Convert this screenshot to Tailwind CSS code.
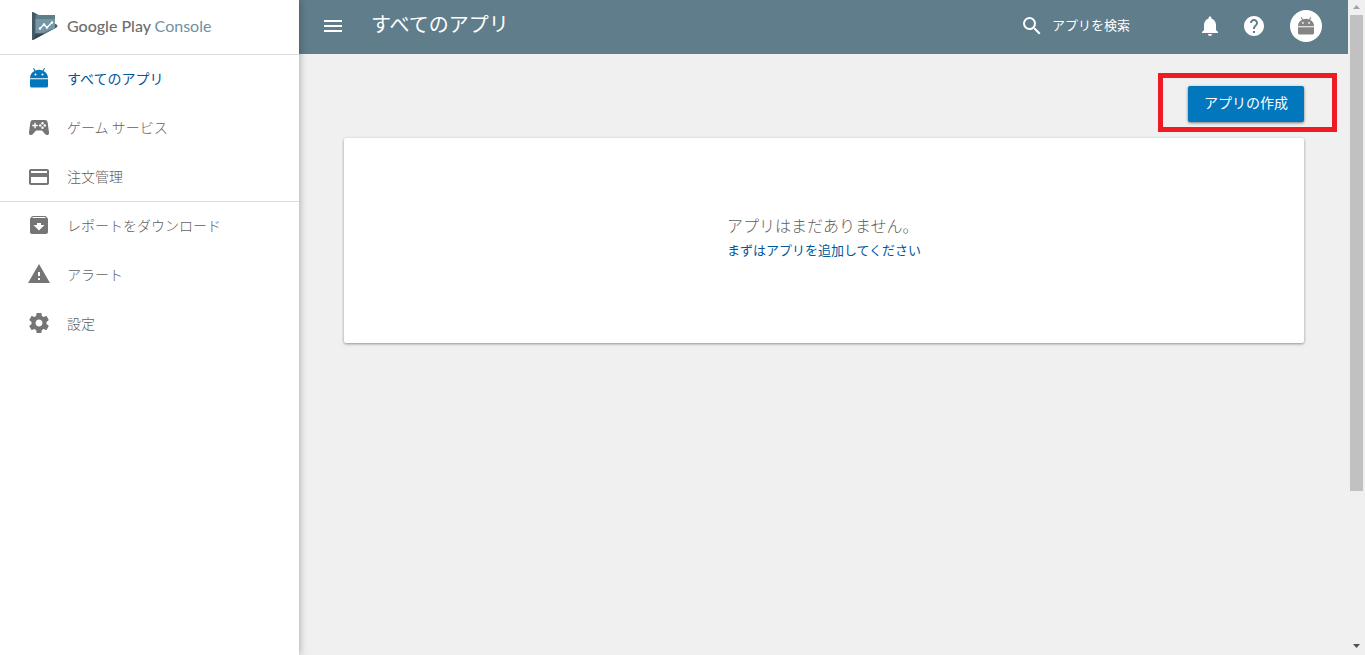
<!DOCTYPE html>
<html lang="ja">
<head>
<meta charset="utf-8">
<meta name="viewport" content="width=device-width, initial-scale=1">
<title>Google Play Console</title>
<script src="https://cdn.jsdelivr.net/npm/@tailwindcss/browser@4"></script>
</head>
<body class="flex h-screen overflow-hidden bg-[#f0f0f0] font-['Noto_Sans_CJK_JP',sans-serif] text-sm font-light text-[#616161]">

<svg class="hidden" aria-hidden="true">
  <symbol id="android" viewBox="0 0 18 20">
    <path d="M3 .6 3.8 0 5.6 2.4Q9 1.2 12.4 2.4L14.2 0 15 .6 13.5 3Q18 5.300 18 10.200H0Q0 5.300 4.500 3ZM5.500 5.600a1 1 0 1 0 0 2 1 1 0 1 0 0-2zm7 0a1 1 0 1 0 0 2 1 1 0 1 0 0-2z" fill-rule="evenodd"/>
    <path d="M0 11.300h18V18q0 1.500-1.500 1.500h-15Q0 19.500 0 18z"/>
  </symbol>
</svg>

<aside class="relative z-10 flex w-[299px] shrink-0 flex-col bg-white shadow-[0_0_8px_rgba(0,0,0,0.35)]">
  <a href="#" class="flex h-[55px] items-center border-b border-[#dcdcdc] pb-[3px] pl-[31px] font-['Lato',sans-serif] text-base">
    <svg class="mr-[9px] h-7 w-[27px]" viewBox="0 0 27 28" aria-hidden="true">
      <path d="M1 .5Q1-.5 2.500.3L25.500 12.500Q27.500 14 25.500 15.500L2.500 27.700Q1 28.500 1 27.500z" fill="#455a64"/>
      <path d="M4.500 3H24V16.300L8 24.500 4.500 21z" fill="#607d8b"/>
      <path d="M4.500 7H24V16.300L8.500 21.500H4.500z" fill="#7596a6"/>
      <path d="M4.500 21.500H13.800L2.500 27.700Z" fill="#37474f"/>
      <path d="m9 16.500 4-4 3 3 5-5" fill="none" stroke="#fff" stroke-width="1.300"/>
      <g fill="#fff"><circle cx="9" cy="16.500" r="1.200"/><circle cx="13" cy="12.500" r="1.200"/><circle cx="16" cy="15.500" r="1.200"/><circle cx="21" cy="10.500" r="1.200"/></g>
    </svg>
    <span class="whitespace-pre font-medium text-[#6e6e6e]">Google Play </span><span class="font-normal text-[#7090a0]">Console</span>
  </a>
  <nav class="[&_a]:flex [&_a]:h-[49px] [&_a]:items-center [&_a]:gap-4 [&_a]:pb-[3px] [&_a]:pl-[27px] [&_span]:pb-px [&_svg]:size-6 [&_svg]:fill-[#757575]">
    <div class="border-b border-[#dcdcdc] [&>a:last-child]:h-[48px] [&>a:last-child]:pb-px">
      <a href="#" class="font-normal text-[#01579b]"><svg class="fill-[#0277bd]!" viewBox="0 0 24 24"><use href="#android" x="3" y="2" width="18" height="20"/></svg><span>すべてのアプリ</span></a>
      <a href="#"><svg viewBox="0 0 24 24"><path d="M6 5h12q2.200 0 2.600 2.200L22 17.200Q22.300 20 20 20q-1.200 0-2-1l-3-3.500H9L6 19q-.8 1-2 1-2.300 0-2-2.800L3.400 7.200Q3.800 5 6 5z"/><path class="fill-white" d="M7.300 7.700h1.400v2.100h2.100v1.400H8.700v2.100H7.300v-2.100H5.200V9.800h2.100z"/><g class="fill-white"><circle cx="15.500" cy="8.200" r="1.200"/><circle cx="15.500" cy="12.800" r="1.200"/><circle cx="13.200" cy="10.500" r="1.200"/><circle cx="17.800" cy="10.500" r="1.200"/></g></svg><span>ゲーム サービス</span></a>
      <a href="#"><svg viewBox="0 0 24 24"><path d="M20 4H4c-1.110 0-1.990.89-1.990 2L2 18c0 1.110.89 2 2 2h16c1.110 0 2-.9 2-2V6c0-1.110-.89-2-2-2zm0 14H4v-6h16v6zm0-10H4V6h16v2z"/></svg><span>注文管理</span></a>
    </div>
    <a href="#"><svg viewBox="0 0 24 24"><path d="m20.540 5.230-1.390-1.680C18.880 3.210 18.470 3 18 3H6c-.47 0-.88.21-1.160.55L3.460 5.230C3.170 5.570 3 6.020 3 6.500V19c0 1.100.9 2 2 2h14c1.100 0 2-.9 2-2V6.500c0-.48-.17-.93-.46-1.270zM12 17.500 6.500 12H10v-2h4v2h3.500L12 17.500zM5.120 5l.81-1h12l.94 1H5.120z"/></svg><span>レポートをダウンロード</span></a>
    <a href="#"><svg viewBox="0 0 24 24"><path d="M1 21h22L12 2 1 21zm12-3h-2v-2h2v2zm0-4h-2v-4h2v4z"/></svg><span>アラート</span></a>
    <a href="#"><svg viewBox="0 0 24 24"><path d="M19.430 12.980c.04-.32.070-.64.070-.98s-.03-.66-.07-.98l2.110-1.650c.19-.15.24-.42.12-.64l-2-3.460c-.12-.22-.39-.3-.61-.22l-2.490 1c-.52-.4-1.080-.73-1.690-.98l-.38-2.650C14.460 2.180 14.250 2 14 2h-4c-.25 0-.46.18-.49.42l-.38 2.650c-.61.25-1.170.59-1.690.98l-2.490-1c-.23-.09-.49 0-.61.22l-2 3.460c-.13.22-.07.49.12.64l2.110 1.650c-.04.32-.07.65-.07.98s.03.66.07.98l-2.110 1.650c-.19.15-.24.42-.12.64l2 3.460c.12.22.39.3.61.22l2.490-1c.52.4 1.080.73 1.690.98l.38 2.650c.03.24.24.42.49.42h4c.25 0 .46-.18.49-.42l.38-2.650c.61-.25 1.170-.59 1.690-.98l2.490 1c.23.09.49 0 .61-.22l2-3.460c.12-.22.070-.49-.12-.64l-2.110-1.650zM12 15.500c-1.930 0-3.500-1.570-3.500-3.500s1.570-3.500 3.500-3.500 3.500 1.570 3.500 3.500-1.570 3.500-3.500 3.500z"/></svg><span>設定</span></a>
  </nav>
</aside>

<div class="flex min-w-0 flex-1 flex-col">
  <header class="flex h-[54px] shrink-0 items-center bg-[#607d8b] pb-0.5 pr-[26px] pl-[22px] text-white">
    <button type="button" aria-label="メニュー" class="mr-[26px]"><svg class="size-6 fill-white" viewBox="0 0 24 24"><path d="M2 18h18v-2H2v2zm0-5h18v-2H2v2zm0-7v2h18V6H2z" transform="translate(1)"/></svg></button>
    <h1 class="pb-1 text-xl font-normal">すべてのアプリ</h1>
    <label class="mr-[46px] ml-auto flex items-center gap-2">
      <svg class="size-6 fill-white" viewBox="0 0 24 24"><path d="M15.500 14h-.79l-.28-.27A6.471 6.471 0 0 0 16 9.500 6.500 6.500 0 1 0 9.500 16c1.610 0 3.090-.59 4.230-1.570l.27.28v.79l5 4.990L20.490 19l-4.990-5zm-6 0C7.010 14 5 11.990 5 9.500S7.010 5 9.500 5 14 7.010 14 9.500 11.990 14 9.500 14z"/></svg>
      <input type="text" aria-label="アプリを検索" placeholder="アプリを検索" class="w-[100px] bg-transparent pb-0.5 text-[13px] font-normal outline-none placeholder:text-white">
    </label>
    <button type="button" aria-label="通知" class="mr-5"><svg class="size-6 fill-white" viewBox="0 0 24 24"><path d="M12 22c1.100 0 2-.9 2-2h-4c0 1.100.89 2 2 2zm6-6v-5c0-3.070-1.640-5.640-4.500-6.320V4c0-.83-.67-1.500-1.500-1.500s-1.500.67-1.500 1.500v.68C7.630 5.360 6 7.920 6 11v5l-2 2v1h16v-1l-2-2z"/></svg></button>
    <button type="button" aria-label="ヘルプ" class="mr-6"><svg class="size-6 fill-white" viewBox="0 0 24 24"><path d="M12 2C6.480 2 2 6.480 2 12s4.480 10 10 10 10-4.480 10-10S17.520 2 12 2zm1 17h-2v-2h2v2zm2.070-7.750-.9.920C13.450 12.900 13 13.500 13 15h-2v-.5c0-1.100.45-2.100 1.170-2.830l1.240-1.260c.37-.36.59-.86.59-1.410 0-1.100-.9-2-2-2s-2 .9-2 2H8c0-2.210 1.790-4 4-4s4 1.790 4 4c0 .88-.36 1.680-.93 2.250z"/></svg></button>
    <button type="button" aria-label="アカウント" class="flex size-8 items-center justify-center rounded-full bg-white"><svg class="h-[18px] w-4 fill-[#858585]" viewBox="0 0 18 20"><use href="#android"/></svg></button>
  </header>

  <main class="flex-1 pt-8 pr-11 pl-[45px]">
    <div class="flex justify-end">
      <div class="relative">
        <button type="button" class="h-9 w-[116px] rounded-[2px] bg-[#0277bd] pb-1 font-normal text-white shadow-[0_1px_3px_rgba(0,0,0,0.5)]">アプリの作成</button>
        <div class="pointer-events-none absolute -top-[13px] -right-[33px] -bottom-[10px] -left-[30px] border-5 border-[#ed1c24]"></div>
      </div>
    </div>
    <section class="mt-4 flex h-[205px] justify-center rounded-[2px] bg-white pt-[75px] shadow-[0_1px_3px_rgba(0,0,0,0.4)]">
      <div>
        <p class="text-base">アプリはまだありません。</p>
        <a href="#" class="block text-[13px] leading-[26px] font-normal text-[#01579b]">まずはアプリを追加してください</a>
      </div>
    </section>
  </main>
</div>

<div class="flex w-[17px] shrink-0 flex-col items-center bg-[#f0f0f0]" aria-hidden="true">
  <svg class="h-[15px] w-[17px]" viewBox="0 0 17 15"><path d="m5 9 3.500-4L12 9z" fill="#a3a3a3"/></svg>
  <div class="h-[476px] w-[13px] bg-[#c1c1c1]"></div>
  <svg class="mt-auto h-[17px] w-[17px]" viewBox="0 0 17 17"><path d="m5 6 3.500 4L12 6z" fill="#505050"/></svg>
</div>
</body>
</html>
